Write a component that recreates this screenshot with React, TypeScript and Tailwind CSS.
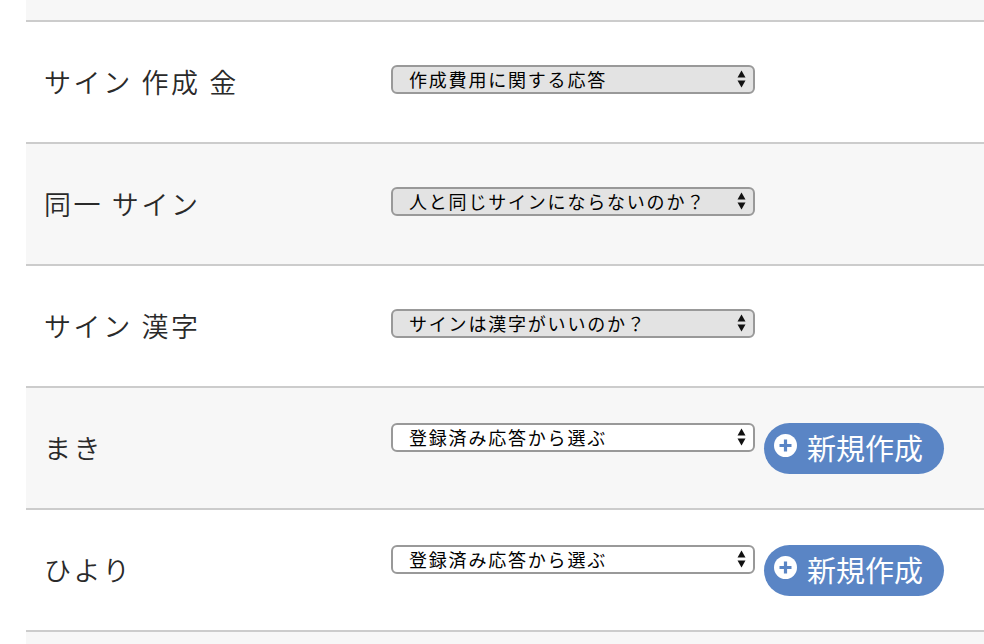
import React from "react";

type Row = {
  label: string;
  value: string;
  filled: boolean;
  canCreate: boolean;
};

const rows: Row[] = [
  { label: "サイン 作成 金", value: "作成費用に関する応答", filled: true, canCreate: false },
  { label: "同一 サイン", value: "人と同じサインにならないのか？", filled: true, canCreate: false },
  { label: "サイン 漢字", value: "サインは漢字がいいのか？", filled: true, canCreate: false },
  { label: "まき", value: "登録済み応答から選ぶ", filled: false, canCreate: true },
  { label: "ひより", value: "登録済み応答から選ぶ", filled: false, canCreate: true },
];

const jp = { fontFamily: '"Noto Sans CJK JP", "Noto Sans", sans-serif' };

function SelectArrows() {
  return (
    <svg
      width="9"
      height="18"
      viewBox="0 0 9 18"
      className="pointer-events-none absolute right-[9px] top-1/2 -translate-y-1/2"
    >
      <path d="M4.5 0.5 L8.5 7.5 H0.5 Z" fill="#111" />
      <path d="M4.5 17.5 L8.5 10.5 H0.5 Z" fill="#111" />
    </svg>
  );
}

function ResponseSelect({ value, filled }: { value: string; filled: boolean }) {
  return (
    <div className="relative w-[364px]">
      <select
        defaultValue={value}
        style={jp}
        className={`h-[29px] w-full appearance-none rounded-[6px] border-2 border-[#999999] pl-[16px] pr-8 text-[18px] leading-[25px] tracking-[1.8px] text-black outline-none ${
          filled ? "bg-[#e3e3e3]" : "bg-white"
        }`}
      >
        <option>{value}</option>
      </select>
      <SelectArrows />
    </div>
  );
}

function CreateButton() {
  return (
    <button
      type="button"
      style={jp}
      className="flex h-[51px] w-[180px] items-center gap-[10px] rounded-full bg-[#5a85c5] pl-[10px] text-[29px] leading-none text-white"
    >
      <svg width="23" height="23" viewBox="0 0 23 23" className="-mt-[6px] shrink-0">
        <circle cx="11.5" cy="11.5" r="11.5" fill="#fff" />
        <path d="M11.5 5.5 V17.5 M5.5 11.5 H17.5" stroke="#5a85c5" strokeWidth="3.2" />
      </svg>
      <span className="-mt-[2px]">新規作成</span>
    </button>
  );
}

export default function App() {
  return (
    <div className="min-h-[644px] bg-white pl-[26px]">
      <div className="h-[22px] border-b-2 border-[#cccccc] bg-[#f7f7f7]" />
      {rows.map((row, i) => (
        <div
          key={row.label + i}
          className={`flex h-[122px] items-center border-b-2 border-[#cccccc] ${
            i % 2 === 1 ? "bg-[#f7f7f7]" : "bg-white"
          }`}
        >
          <div
            style={jp}
            className="w-[365px] shrink-0 pl-[18px] text-[27px] font-[350] tracking-[2.6px] text-[#2a2a2a]"
          >
            {row.label}
          </div>
          <div className={`flex items-start gap-[9px] ${row.canCreate ? "" : "pb-[6px]"}`}>
            <ResponseSelect value={row.value} filled={row.filled} />
            {row.canCreate && <CreateButton />}
          </div>
        </div>
      ))}
      <div className="h-[20px] bg-[#f7f7f7]" />
    </div>
  );
}
